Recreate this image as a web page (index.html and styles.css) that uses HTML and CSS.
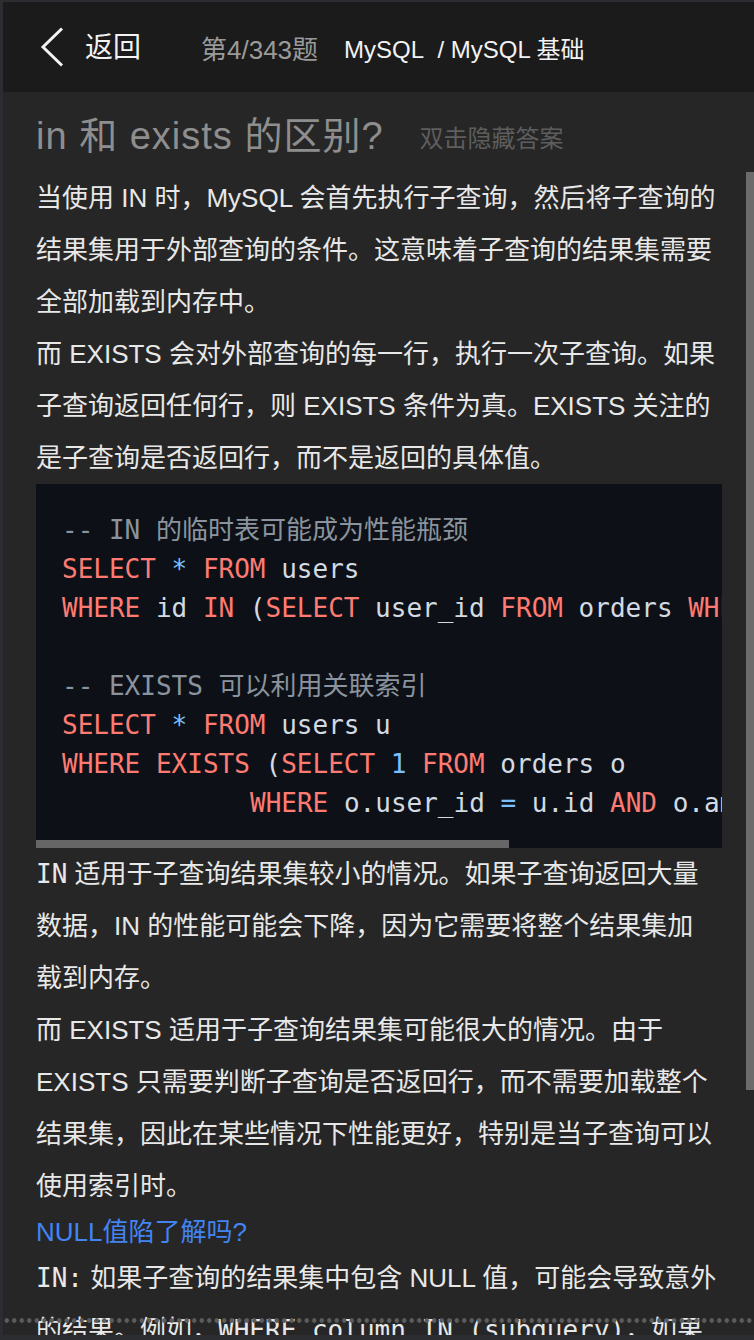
FILE: index.html
```html
<!DOCTYPE html>
<html lang="zh-CN">
<head>
<meta charset="utf-8">
<title>in 和 exists 的区别?</title>
<link rel="stylesheet" href="styles.css">
</head>
<body>
<div class="app">
  <header class="topbar">
    <div class="back">
      <svg class="back-icon" viewBox="0 0 24 40" width="24" height="40" aria-hidden="true"><polyline points="22,1.5 3,20 22,38.5" fill="none" stroke="#f2f2f2" stroke-width="3"/></svg>
      <span class="back-label">返回</span>
    </div>
    <span class="progress">第4/343题</span>
    <span class="crumb">MySQL&nbsp; / MySQL 基础</span>
  </header>

  <div class="title-row">
    <h1 class="q-title">in 和 exists 的区别?</h1>
    <span class="hint">双击隐藏答案</span>
  </div>

  <main class="answer">
    <p>当使用 IN 时，MySQL 会首先执行子查询，然后将子查询的<br>结果集用于外部查询的条件。这意味着子查询的结果集需要<br>全部加载到内存中。</p>
    <p>而 EXISTS 会对外部查询的每一行，执行一次子查询。如果<br>子查询返回任何行，则 EXISTS 条件为真。EXISTS 关注的<br>是子查询是否返回行，而不是返回的具体值。</p>
    <div class="code-block">
      <div class="code">
        <div class="line"><span class="c">-- IN 的临时表可能成为性能瓶颈</span></div>
        <div class="line"><span class="k">SELECT</span> <span class="o">*</span> <span class="k">FROM</span> users</div>
        <div class="line"><span class="k">WHERE</span> id <span class="k">IN</span> (<span class="k">SELECT</span> user_id <span class="k">FROM</span> orders <span class="k">WHERE</span> amount <span class="o">&gt;</span> <span class="o">100</span>);</div>
        <div class="line line-empty"></div>
        <div class="line"><span class="c">-- EXISTS 可以利用关联索引</span></div>
        <div class="line"><span class="k">SELECT</span> <span class="o">*</span> <span class="k">FROM</span> users u</div>
        <div class="line"><span class="k">WHERE</span> <span class="k">EXISTS</span> (<span class="k">SELECT</span> <span class="o">1</span> <span class="k">FROM</span> orders o</div>
        <div class="line line-indent"><span class="k">WHERE</span> o.user_id <span class="o">=</span> u.id <span class="k">AND</span> o.amount <span class="o">&gt;</span> <span class="o">100</span>);</div>
      </div>
      <div class="hscroll"><div class="hscroll-thumb"></div></div>
    </div>
    <p><span class="mono">IN</span> 适用于子查询结果集较小的情况。如果子查询返回大量<br>数据，IN 的性能可能会下降，因为它需要将整个结果集加<br>载到内存。</p>
    <p>而 EXISTS 适用于子查询结果集可能很大的情况。由于<br>EXISTS 只需要判断子查询是否返回行，而不需要加载整个<br>结果集，因此在某些情况下性能更好，特别是当子查询可以<br>使用索引时。</p>
    <h2 class="sub">NULL值陷了解吗?</h2>
    <p><span class="mono">IN:</span> 如果子查询的结果集中包含 NULL 值，可能会导致意外<br>的结果。例如，<span class="mono">WHERE column IN (subquery)</span>，如果<br>子查询返回的结果中包含 NULL，那么对于不在结果集中<br>的值，条件判断的结果将是 UNKNOWN，而不是 FALSE。<br>这可能会使查询返回的结果与预期不一致。</p>
    <p>EXISTS: 只关心子查询是否返回行，不受 NULL 值的影响，<br>因此在处理可能包含 NULL 的数据时更加可靠。</p>
  </main>

  <div class="vscroll-thumb" aria-hidden="true"></div>
  <div class="dots" aria-hidden="true"></div>
</div>
</body>
</html>
```

FILE: styles.css
```css
* {
  box-sizing: border-box;
}

html,
body {
  margin: 0;
  height: 100%;
}

body {
  display: flex;
  flex-direction: column;
  padding: 2px 0 5px 3px;
  background: #2b2d31;
  font-family: "Liberation Sans", "Noto Sans CJK SC", sans-serif;
  overflow: hidden;
}

.app {
  position: relative;
  flex: 1;
  min-height: 0;
  display: flex;
  flex-direction: column;
  background: #262626;
}

/* ---------- top bar ---------- */
.topbar {
  flex: none;
  height: 90px;
  display: flex;
  align-items: center;
  padding-left: 37px;
  background: #1b1b1b;
  color: #f2f2f2;
}

.back {
  display: flex;
  align-items: center;
  gap: 21px;
}

.back-icon {
  display: block;
}

.back-label {
  font-size: 28px;
  line-height: 1;
  padding-top: 2px;
}

.progress {
  margin-left: 60px;
  font-size: 26px;
  color: #9a9a9a;
}

.crumb {
  margin-left: 26px;
  font-size: 24px;
  color: #f2f2f2;
}

/* ---------- title ---------- */
.title-row {
  flex: none;
  height: 80px;
  display: flex;
  align-items: center;
  gap: 36px;
  padding: 8px 0 0 33px;
}

.q-title {
  margin: 0;
  font-size: 38px;
  font-weight: 400;
  line-height: 1;
  letter-spacing: 1px;
  color: #8e8e8e;
}

.hint {
  font-size: 24px;
  color: #5e5e5e;
}

/* ---------- answer ---------- */
.answer {
  flex: 1;
  min-height: 0;
  overflow: hidden;
  padding: 0 32px 29px 33px;
  font-size: 26px;
  line-height: 52px;
  color: #e8e8e8;
}

.answer p {
  margin: 0;
  white-space: nowrap;
}

.mono {
  font-family: "DejaVu Sans Mono", "Noto Sans CJK SC", monospace;
}

.sub {
  margin: 0;
  font-size: 26px;
  font-weight: 400;
  line-height: 40px;
  color: #4284f3;
}

/* ---------- code ---------- */
.code-block {
  background: #0d1117;
}

.code {
  padding: 27px 26px 17px;
  overflow: hidden;
  font-family: "DejaVu Sans Mono", "Noto Sans CJK SC", monospace;
  font-size: 26px;
  line-height: 39px;
  color: #d3dae1;
}

.line {
  height: 39px;
  white-space: pre;
}

.line-indent {
  padding-left: 188px;
}

.hscroll {
  height: 8px;
}

.hscroll-thumb {
  width: 69%;
  height: 100%;
  background: #666666;
}

.c {
  color: #8b949e;
}

.k {
  color: #ff7b72;
}

.o {
  color: #79c0ff;
}

/* ---------- overlays ---------- */
.vscroll-thumb {
  position: absolute;
  top: 170px;
  right: 0;
  width: 8px;
  height: 918px;
  background: #6b6b6b;
}

.dots {
  position: absolute;
  left: 0;
  right: 0;
  bottom: 12px;
  height: 5px;
  background-image: radial-gradient(circle at center, #5c5c5c 2px, transparent 2.6px);
  background-size: 7.5px 5px;
  pointer-events: none;
}
```
